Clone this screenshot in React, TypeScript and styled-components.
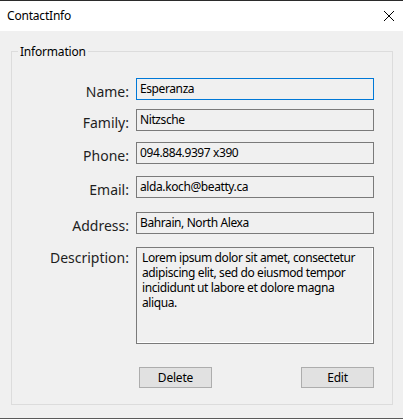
import React from "react";
import styled, { createGlobalStyle } from "styled-components";

const Global = createGlobalStyle`
  html, body { margin: 0; padding: 0; background: #f0f0f0; }
  body { font-family: "Noto Sans", "Open Sans", sans-serif; color: #000; }
`;

const Window = styled.div`
  width: 403px;
  height: 419px;
  box-sizing: border-box;
  border-top: 1px solid #2b2b2b;
  border-bottom: 1px solid #5a5a5a;
  display: flex;
  flex-direction: column;
  background: #f0f0f0;
`;

const TitleBar = styled.div`
  height: 30px;
  background: #fff;
  display: flex;
  align-items: center;
  justify-content: space-between;
  padding: 0 8px 0 7px;
  font-size: 12px;
`;

const Title = styled.span`
  margin-top: -1px;
  letter-spacing: -0.2px;
`;

const Body = styled.div`
  flex: 1;
  padding: 12px 10px 13px 11px;
  display: flex;
`;

const Group = styled.fieldset`
  flex: 1;
  margin: 0;
  padding: 0;
  border: 1px solid #dcdcdc;
  display: flex;
  flex-direction: column;
  min-width: 0;
`;

const Legend = styled.legend`
  font-size: 12px;
  padding: 0 2px;
  margin-left: 6px;
  letter-spacing: -0.2px;
`;

const Row = styled.div<{ $mt: number; $top?: boolean }>`
  display: flex;
  align-items: ${(p) => (p.$top ? "flex-start" : "center")};
  margin-top: ${(p) => p.$mt}px;
`;

const Label = styled.label<{ $dy?: number }>`
  width: 117px;
  text-align: right;
  font-size: 14px;
  color: #1e1e1e;
  margin-right: 7px;
  position: relative;
  top: ${(p) => p.$dy ?? 2}px;
`;

const Field = styled.div<{ $focus?: boolean }>`
  width: 238px;
  height: 22px;
  box-sizing: border-box;
  border: 1px solid ${(p) => (p.$focus ? "#0078d7" : "#7a7a7a")};
  background: #f0f0f0;
  font-size: 12px;
  letter-spacing: -0.4px;
  display: flex;
  align-items: center;
  padding: 0 0 1px 3px;
  white-space: nowrap;
  overflow: hidden;
`;

const Area = styled.div`
  width: 238px;
  height: 97px;
  box-sizing: border-box;
  border: 1px solid #7a7a7a;
  box-shadow: inset -1px -1px 0 #fff;
  background: #f0f0f0;
  font-size: 12px;
  letter-spacing: -0.4px;
  line-height: 15px;
  padding: 2px 4px 0 5px;
`;

const Buttons = styled.div`
  display: flex;
  justify-content: space-between;
  width: 235px;
  margin: 23px 0 0 127px;
`;

const Button = styled.button`
  width: 73px;
  height: 21px;
  box-sizing: border-box;
  border: 1px solid #adadad;
  background: #e1e1e1;
  font-family: "Noto Sans", "Open Sans", sans-serif;
  font-size: 12px;
  letter-spacing: -0.2px;
  padding: 0;
  color: #000;
`;

const CloseIcon = () => (
  <svg width="12" height="12" viewBox="0 0 12 12">
    <path d="M1 1 L11 11 M11 1 L1 11" stroke="#000" strokeWidth="1" />
  </svg>
);

export default function App() {
  return (
    <>
      <Global />
      <Window>
        <TitleBar>
          <Title>ContactInfo</Title>
          <CloseIcon />
        </TitleBar>
        <Body>
          <Group>
            <Legend>Information</Legend>
            <Row $mt={18}>
              <Label>Name:</Label>
              <Field $focus>Esperanza</Field>
            </Row>
            <Row $mt={9}>
              <Label>Family:</Label>
              <Field>Nitzsche</Field>
            </Row>
            <Row $mt={11}>
              <Label>Phone:</Label>
              <Field>094.884.9397 x390</Field>
            </Row>
            <Row $mt={12}>
              <Label>Email:</Label>
              <Field>alda.koch@beatty.ca</Field>
            </Row>
            <Row $mt={14}>
              <Label>Address:</Label>
              <Field>Bahrain, North Alexa</Field>
            </Row>
            <Row $mt={13} $top>
              <Label $dy={1}>Description:</Label>
              <Area>
                Lorem ipsum dolor sit amet, consectetur adipiscing elit, sed do
                eiusmod tempor incididunt ut labore et dolore magna aliqua.
              </Area>
            </Row>
            <Buttons>
              <Button>Delete</Button>
              <Button>Edit</Button>
            </Buttons>
          </Group>
        </Body>
      </Window>
    </>
  );
}
